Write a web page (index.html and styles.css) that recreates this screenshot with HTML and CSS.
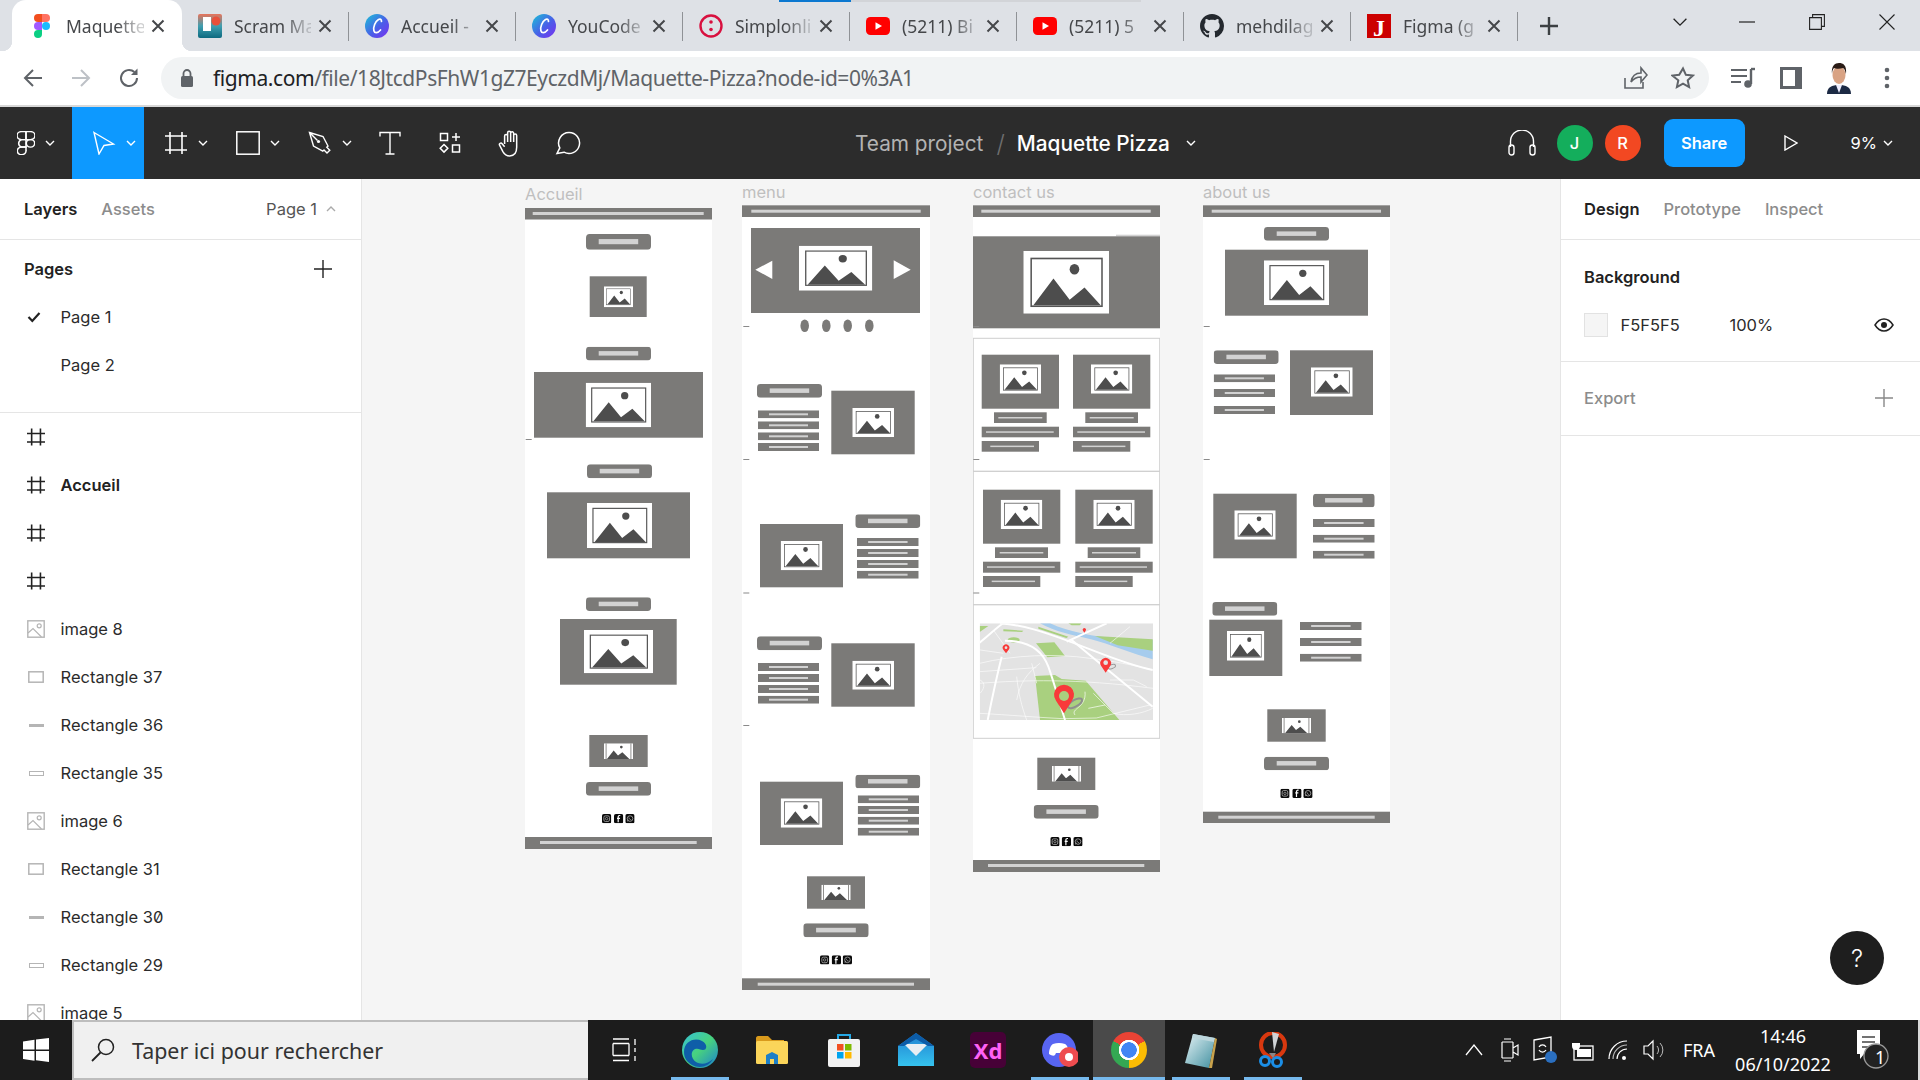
FILE: index.html
```html
<!DOCTYPE html>
<html lang="fr">
<head>
<meta charset="utf-8">
<title>Maquette Pizza – Figma</title>
<link rel="stylesheet" href="styles.css">
</head>
<body>
<svg class="sprite" aria-hidden="true">
  <defs>
    <linearGradient id="canvaG" x1="0" y1="0" x2="1" y2="1"><stop offset="0" stop-color="#19c3d6"/><stop offset=".55" stop-color="#4a5ee8"/><stop offset="1" stop-color="#7b2ff0"/></linearGradient>
    <linearGradient id="edgeG" x1="0" y1="0" x2="1" y2="1"><stop offset="0" stop-color="#35c1d8"/><stop offset=".5" stop-color="#48d27e"/><stop offset="1" stop-color="#1a7fd0"/></linearGradient>
    <linearGradient id="scrumG" x1="0" y1="0" x2="0" y2="1"><stop offset="0" stop-color="#e8735a"/><stop offset=".5" stop-color="#3f9fb0"/><stop offset="1" stop-color="#0d6a80"/></linearGradient>
    <linearGradient id="mailG" x1="0" y1="0" x2="0" y2="1"><stop offset="0" stop-color="#1f7fd0"/><stop offset="1" stop-color="#36c3ee"/></linearGradient>
    <linearGradient id="noteG" x1="0" y1="0" x2="1" y2="1"><stop offset="0" stop-color="#e6f3f6"/><stop offset="1" stop-color="#3f8f9f"/></linearGradient>
  </defs>
  <symbol id="chev" viewBox="0 0 10 6"><polyline points="1,1 5,5 9,1" fill="none" stroke="currentColor"/></symbol>
  <symbol id="frameic" viewBox="0 0 24 24"><path d="M6 1v22M18 1v22M1 5h22M1 19h22" fill="none" stroke="currentColor" stroke-width="1.6"/></symbol>
  <symbol id="hash" viewBox="0 0 17 16"><path d="M4.400 0v16M12.700 0v16M0 4.700h17M0 12.700h17" fill="none" stroke="currentColor" stroke-width="1.500"/></symbol>
  <symbol id="x" viewBox="0 0 14 14"><path d="M1.500 1.500l11 11M12.500 1.500l-11 11" fill="none" stroke="#45474a" stroke-width="2"/></symbol>
  <symbol id="imgic" viewBox="0 0 18 18"><rect x=".8" y=".8" width="16.400" height="16.400" fill="none" stroke="#b5b5b5" stroke-width="1.400"/><circle cx="12.200" cy="5.800" r="2" fill="none" stroke="#b5b5b5" stroke-width="1.200"/><path d="M1 13l5-4.500 8.500 8.500" fill="none" stroke="#b5b5b5" stroke-width="1.200"/></symbol>
  <symbol id="rectic" viewBox="-1 -3 18 18"><rect x=".8" y=".8" width="14.400" height="10.400" fill="none" stroke="#b5b5b5" stroke-width="1.500"/></symbol>
  <symbol id="pic" viewBox="0 0 196 134" preserveAspectRatio="none">
    <rect width="196" height="134" fill="#fff"/>
    <rect x="18" y="16" width="162" height="102" fill="#fff" stroke="#555" stroke-width="3.500"/>
    <circle cx="117" cy="39" r="11" fill="#4d4d4d"/>
    <path d="M23 116L69 59l37 45 34-26 37 38z" fill="#4d4d4d"/>
  </symbol>
  <symbol id="pic2" viewBox="0 0 87 46" preserveAspectRatio="none">
    <rect width="87" height="46" fill="#fff"/>
    <rect x="5" y="0" width="2.500" height="46" fill="#7b7a78"/><rect x="79.500" y="0" width="2.500" height="46" fill="#7b7a78"/>
    <circle cx="52" cy="11" r="4" fill="#4d4d4d"/>
    <path d="M9 46L29 21l13 15 13-10 21 20z" fill="#4d4d4d"/>
  </symbol>
  <symbol id="btn" viewBox="0 0 65 14" preserveAspectRatio="none">
    <rect width="65" height="14" rx="3.500" fill="#7b7a78"/><rect x="12.700" y="4.500" width="39.500" height="4.600" fill="#d2d2d2"/>
  </symbol>
  <symbol id="tl" viewBox="0 0 61 8" preserveAspectRatio="none">
    <rect width="61" height="8" fill="#7b7a78"/><rect x="11" y="3" width="39" height="2" fill="#d2d2d2"/>
  </symbol>
  <symbol id="soc1" viewBox="0 0 10 10"><rect width="10" height="10" rx="2" fill="#0a0a0a"/><rect x="2" y="2" width="6" height="6" rx="1.500" fill="none" stroke="#bbb" stroke-width=".8"/><circle cx="5" cy="5" r="1.300" fill="none" stroke="#bbb" stroke-width=".7"/></symbol>
  <symbol id="soc2" viewBox="0 0 10 10"><rect width="10" height="10" rx="2" fill="#0a0a0a"/><path d="M6.800 1.600H6c-1 0-1.500.6-1.500 1.600V9M3.200 4.600h3.300" fill="none" stroke="#fff" stroke-width="1.300"/></symbol>
  <symbol id="soc3" viewBox="0 0 10 10"><rect width="10" height="10" rx="2" fill="#0a0a0a"/><circle cx="5.100" cy="4.900" r="3" fill="none" stroke="#bbb" stroke-width=".8"/><path d="M2.400 8l.6-1.800M3.900 3.700c0 1.400 1 2.400 2.400 2.500" fill="none" stroke="#bbb" stroke-width=".8"/></symbol>
  <symbol id="yt" viewBox="0 0 24 24"><rect x="0" y="3" width="24" height="18" rx="4.500" fill="#f00"/><path d="M9.500 8.200v7.600L16 12z" fill="#fff"/></symbol>
  <symbol id="canva" viewBox="0 0 24 24"><circle cx="12" cy="12" r="12" fill="url(#canvaG)"/><path d="M16.500 7.500c.1-2.200-1.500-3-3-2-3.200 2-5.600 7.500-4.600 11.200.7 2.600 3.900 2.600 6.600-.7" fill="none" stroke="#fff" stroke-width="1.700" stroke-linecap="round"/></symbol>
</svg>

<header class="browser">
  <div class="tabstrip">
    <div class="tab tab-active">
      <svg class="favicon" viewBox="0 0 24 24"><path d="M12 0H8a4 4 0 0 0 0 8h4z" fill="#f24e1e"/><path d="M12 0h4a4 4 0 0 1 0 8h-4z" fill="#ff7262"/><path d="M12 8H8a4 4 0 0 0 0 8h4z" fill="#a259ff"/><circle cx="16" cy="12" r="4" fill="#1abcfe"/><path d="M8 16h4v4a4 4 0 1 1-4-4z" fill="#0acf83"/></svg>
      <span class="tab-title">Maquette</span><svg class="tab-x"><use href="#x"/></svg>
    </div>
    <div class="tab tab-nosep">
      <svg class="favicon" viewBox="0 0 24 24"><rect width="24" height="24" rx="2" fill="url(#scrumG)"/><rect x="5" y="3" width="8" height="14" fill="#fff"/><circle cx="18" cy="7" r="4.500" fill="#e8503a"/></svg>
      <span class="tab-title">Scram Ma</span><svg class="tab-x"><use href="#x"/></svg>
    </div>
    <div class="tab"><svg class="favicon"><use href="#canva"/></svg><span class="tab-title">Accueil -</span><svg class="tab-x"><use href="#x"/></svg></div>
    <div class="tab"><svg class="favicon"><use href="#canva"/></svg><span class="tab-title">YouCode</span><svg class="tab-x"><use href="#x"/></svg></div>
    <div class="tab">
      <svg class="favicon" viewBox="0 0 24 24"><circle cx="12" cy="12" r="10.500" fill="none" stroke="#d8103f" stroke-width="2.400"/><circle cx="12" cy="8" r="1.800" fill="#d8103f"/><circle cx="12" cy="15.500" r="1.800" fill="#d8103f"/></svg>
      <span class="tab-title">Simplonli</span><svg class="tab-x"><use href="#x"/></svg>
    </div>
    <div class="tab"><svg class="favicon"><use href="#yt"/></svg><span class="tab-title">(5211) Bi</span><svg class="tab-x"><use href="#x"/></svg></div>
    <div class="tab"><svg class="favicon"><use href="#yt"/></svg><span class="tab-title">(5211) 5</span><svg class="tab-x"><use href="#x"/></svg></div>
    <div class="tab">
      <svg class="favicon" viewBox="0 0 16 16"><path fill="#24292f" d="M8 0C3.58 0 0 3.58 0 8c0 3.54 2.29 6.53 5.47 7.59.4.07.55-.17.55-.38 0-.19-.01-.82-.01-1.49-2.01.37-2.53-.49-2.69-.94-.09-.23-.48-.94-.82-1.13-.28-.15-.68-.52-.01-.53.63-.01 1.08.58 1.23.82.72 1.21 1.87.87 2.33.66.07-.52.28-.87.51-1.07-1.78-.2-3.64-.89-3.64-3.95 0-.87.31-1.59.82-2.15-.08-.2-.36-1.02.08-2.12 0 0 .67-.21 2.2.82.64-.18 1.32-.27 2-.27.68 0 1.36.09 2 .27 1.53-1.04 2.2-.82 2.2-.82.44 1.1.16 1.92.08 2.12.51.56.82 1.27.82 2.15 0 3.07-1.87 3.75-3.65 3.95.29.25.54.73.54 1.48 0 1.07-.01 1.93-.01 2.2 0 .21.15.46.55.38A8.013 8.013 0 0016 8c0-4.42-3.58-8-8-8z"/></svg>
      <span class="tab-title">mehdilag</span><svg class="tab-x"><use href="#x"/></svg>
    </div>
    <div class="tab">
      <svg class="favicon" viewBox="0 0 24 24"><rect width="24" height="24" fill="#cc0000"/><text class="fav-j" x="12" y="22" text-anchor="middle">J</text></svg>
      <span class="tab-title">Figma (g</span><svg class="tab-x"><use href="#x"/></svg>
    </div>
    <svg class="newtab" viewBox="0 0 18 18"><path d="M9 0v18M0 9h18" fill="none" stroke="#3c4043" stroke-width="2.400"/></svg>
    <div class="winctrls">
      <svg class="tabsearch"><use href="#chev"/></svg>
      <span class="winbtn"><svg width="16" height="16" viewBox="0 0 16 16"><path d="M0 8h16" stroke="#222" stroke-width="1.200"/></svg></span>
      <span class="winbtn"><svg width="16" height="16" viewBox="0 0 16 16"><path d="M.6 3.600h11.800v11.800H.6zM3.600 3.400V.6h11.800v11.800h-2.800" fill="none" stroke="#222" stroke-width="1.100"/></svg></span>
      <span class="winbtn"><svg width="16" height="16" viewBox="0 0 16 16"><path d="M.5.5l15 15M15.500.5l-15 15" fill="none" stroke="#222" stroke-width="1.100"/></svg></span>
    </div>
  </div>
  <div class="addrbar">
    <span class="navbtn"><svg width="22" height="22" viewBox="0 0 22 22"><path d="M20 11H3M11 3l-8 8 8 8" fill="none" stroke="#5f6368" stroke-width="2"/></svg></span>
    <span class="navbtn"><svg width="22" height="22" viewBox="0 0 22 22"><path d="M2 11h17M11 3l8 8-8 8" fill="none" stroke="#bdc1c6" stroke-width="2"/></svg></span>
    <span class="navbtn"><svg width="24" height="24" viewBox="0 0 24 24"><path d="M20 12a8 8 0 1 1-2.600-5.900" fill="none" stroke="#5f6368" stroke-width="2"/><path d="M20.500 2.500v6.500h-6.500z" fill="#5f6368"/></svg></span>
    <div class="omnibox">
      <svg class="lock" viewBox="0 0 24 24"><rect x="6" y="10" width="12" height="11" rx="1.500" fill="#5f6368"/><path d="M8.500 10V7.500a3.500 3.500 0 0 1 7 0V10" fill="none" stroke="#5f6368" stroke-width="1.800"/></svg>
      <span class="url"><span class="url-host">figma.com</span>/file/18JtcdPsFhW1gZ7EyczdMj/Maquette-Pizza?node-id=0%3A1</span>
      <span class="navbtn"><svg width="26" height="26" viewBox="0 0 26 26"><path d="M3 13v10h18v-6M9 17c1-6 5-9 10-9V3l6 7-6 7v-5c-4 0-7 1-10 5z" fill="none" stroke="#5f6368" stroke-width="1.600"/></svg></span>
      <span class="navbtn"><svg width="24" height="24" viewBox="0 0 24 24"><path d="M12 2.500l2.900 6.300 6.900.8-5.100 4.700 1.400 6.800-6.100-3.400-6.100 3.400 1.400-6.800L1.300 9.600l6.900-.8z" fill="none" stroke="#5f6368" stroke-width="2"/></svg></span>
    </div>
    <span class="navbtn"><svg width="26" height="24" viewBox="0 0 26 24"><path d="M1 4h16M1 10h16M1 16h10" stroke="#5f6368" stroke-width="2.200"/><path d="M21 3v15" stroke="#5f6368" stroke-width="2.400"/><path d="M21 3h4" stroke="#5f6368" stroke-width="2.400"/><circle cx="18" cy="18" r="3.800" fill="#5f6368"/></svg></span>
    <span class="navbtn"><svg width="22" height="22" viewBox="0 0 22 22"><path d="M0 0h22v22H0zM15 3H3v16h12z" fill="#5f6368" fill-rule="evenodd"/></svg></span>
    <span class="navbtn"><svg width="26" height="32" viewBox="0 0 26 32"><path d="M1 32c0-7 5-9 12-9s12 2 12 9z" fill="#1c2a44"/><path d="M10 23h6l-3 8z" fill="#eef"/><ellipse cx="13" cy="13" rx="6.500" ry="9" fill="#d9a384"/><path d="M6 12c-1-8 3-11 7-11s8 2 7 11c-1-3-1-5-3-6-3 1-7 1-9 0-1 1-2 3-2 6z" fill="#2a1c16"/></svg></span>
    <span class="navbtn"><svg width="6" height="22" viewBox="0 0 6 22"><circle cx="3" cy="3" r="2.300" fill="#5f6368"/><circle cx="3" cy="11" r="2.300" fill="#5f6368"/><circle cx="3" cy="19" r="2.300" fill="#5f6368"/></svg></span>
  </div>
</header>

<div class="toolbar">
  <div class="tools">
    <span class="tool tool-logo">
      <svg class="ic-logo" viewBox="5 2 14 21" preserveAspectRatio="none"><g fill="none" stroke="#fff" stroke-width="1.200"><path d="M12 2.500H8.500a3.500 3.500 0 0 0 0 7H12z"/><path d="M12 2.500h3.500a3.500 3.500 0 0 1 0 7H12z"/><path d="M12 9.500H8.500a3.500 3.500 0 0 0 0 6.500H12z"/><circle cx="15.500" cy="12.800" r="3.300"/><path d="M8.500 16H12v3.200a3.400 3.400 0 1 1-3.500-3.200z"/></g></svg>
      <svg class="chev"><use href="#chev"/></svg>
    </span>
    <span class="tool tool-dd tool-on">
      <svg class="ic" viewBox="0 0 24 24"><path d="M2 1.500l19.500 11.500-9.500 1.500-5 8.500z" fill="none" stroke="#fff" stroke-width="1.400"/></svg>
      <svg class="chev"><use href="#chev"/></svg>
    </span>
    <span class="tool tool-dd"><svg class="ic"><use href="#frameic"/></svg><svg class="chev"><use href="#chev"/></svg></span>
    <span class="tool tool-dd">
      <svg class="ic" viewBox="0 0 24 24"><rect x=".8" y=".8" width="22.400" height="22.400" fill="none" stroke="#fff" stroke-width="1.500"/></svg>
      <svg class="chev"><use href="#chev"/></svg>
    </span>
    <span class="tool tool-dd">
      <svg class="ic" viewBox="0 0 24 24"><path d="M1.500 1.500l13.500 4 5 9.500-1.200 1.200 3 3-2.800 2.800-3-3-1.200 1.200-9.300-5.200zM1.500 1.500l8 8" fill="none" stroke="#fff" stroke-width="1.400"/><circle cx="10.500" cy="10.500" r="1.600" fill="#fff"/></svg>
      <svg class="chev"><use href="#chev"/></svg>
    </span>
    <span class="tool"><svg class="ic" viewBox="0 0 24 24"><path d="M2 5.500V1.500h20v4M12 1.500v21.500M7.500 23h9" fill="none" stroke="#fff" stroke-width="1.400"/></svg></span>
    <span class="tool"><svg class="ic" viewBox="0 0 24 24"><g fill="none" stroke="#fff" stroke-width="1.500"><rect x="2.500" y="2.500" width="7" height="7"/><path d="M18 2v8M14 6h8"/><path d="M6 13.500l3.800 3.800L6 21.100l-3.800-3.800z"/><rect x="14.500" y="14" width="7" height="7"/></g></svg></span>
    <span class="tool"><svg class="ic ic-hand" viewBox="0 0 24 26"><path d="M7 14V6.500a1.400 1.400 0 0 1 2.800 0V12M9.800 12V3.400a1.400 1.400 0 0 1 2.800 0V12M12.600 12V4a1.400 1.400 0 0 1 2.800 0v8M15.400 12V6a1.400 1.400 0 0 1 2.800 0v11c0 5-2.500 8-6.500 8-3 0-4.900-1.500-6.300-4L2.300 15c-.8-1.400 1.400-2.800 2.400-1.200L7 16.500" fill="none" stroke="#fff" stroke-width="1.400"/></svg></span>
    <span class="tool tool-comment"><svg class="ic ic-comment" viewBox="0 0 26 24"><path d="M14 1.500a10.500 10.500 0 1 1-5 19.700L2 22.500l2.800-5.600A10.500 10.500 0 0 1 14 1.500z" fill="none" stroke="#fff" stroke-width="1.500"/></svg></span>
  </div>
  <div class="filename">
    <span class="fn-team">Team project</span><span class="fn-sep">/</span><span class="fn-name">Maquette Pizza</span><svg class="chev fn-chev"><use href="#chev"/></svg>
  </div>
  <div class="tb-right">
    <svg class="ic-phones" viewBox="0 0 28 26"><path d="M2.500 17v-5.500a11.500 11.500 0 0 1 23 0V17" fill="none" stroke="#fff" stroke-width="1.400"/><rect x="1" y="15" width="5" height="10" rx="2.500" fill="none" stroke="#fff" stroke-width="1.400"/><rect x="22" y="15" width="5" height="10" rx="2.500" fill="none" stroke="#fff" stroke-width="1.400"/></svg>
    <span class="avatar av-j">J</span>
    <span class="avatar av-r">R</span>
    <span class="share">Share</span>
    <svg class="ic-play" viewBox="0 0 14 16"><path d="M1 1l12 7-12 7z" fill="none" stroke="#fff" stroke-width="1.400"/></svg>
    <span class="zoomlvl">9%</span><svg class="chev"><use href="#chev"/></svg>
  </div>
</div>

<main class="workspace">
  <aside class="left-panel">
    <div class="panel-tabs">
      <span class="ptab ptab-on">Layers</span><span class="ptab">Assets</span>
      <span class="page-picker">Page 1<svg class="chev chev-up"><use href="#chev"/></svg></span>
    </div>
    <section class="pages">
      <div class="pages-head"><span class="strong">Pages</span><svg class="plus" viewBox="0 0 18 18"><path d="M9 0v18M0 9h18" stroke="#222" stroke-width="1.400"/></svg></div>
      <div class="row"><svg class="row-svg check" viewBox="0 0 14 12"><path d="M1.500 6l3.800 4L12.500 2" fill="none" stroke="#222" stroke-width="2.200"/></svg><span>Page 1</span></div>
      <div class="row"><span class="row-ic"></span><span>Page 2</span></div>
    </section>
    <ul class="layers">
      <li class="row"><svg class="row-svg frame"><use href="#hash"/></svg></li>
      <li class="row strong"><svg class="row-svg frame"><use href="#hash"/></svg><span>Accueil</span></li>
      <li class="row"><svg class="row-svg frame"><use href="#hash"/></svg></li>
      <li class="row"><svg class="row-svg frame"><use href="#hash"/></svg></li>
      <li class="row"><svg class="row-svg"><use href="#imgic"/></svg><span>image 8</span></li>
      <li class="row"><svg class="row-svg"><use href="#rectic"/></svg><span>Rectangle 37</span></li>
      <li class="row"><span class="row-ic"><i class="dash-solid"></i></span><span>Rectangle 36</span></li>
      <li class="row"><span class="row-ic"><i class="dash-open"></i></span><span>Rectangle 35</span></li>
      <li class="row"><svg class="row-svg"><use href="#imgic"/></svg><span>image 6</span></li>
      <li class="row"><svg class="row-svg"><use href="#rectic"/></svg><span>Rectangle 31</span></li>
      <li class="row"><span class="row-ic"><i class="dash-solid"></i></span><span class="slashed">Rectangle 30</span></li>
      <li class="row"><span class="row-ic"><i class="dash-open"></i></span><span>Rectangle 29</span></li>
      <li class="row"><svg class="row-svg"><use href="#imgic"/></svg><span>image 5</span></li>
    </ul>
  </aside>

  <div class="canvas">
    <div class="board board-accueil">
      <div class="board-label">Accueil</div>
      <svg class="wire" width="187" height="641" viewBox="525 208 187 641">
        <rect class="w" x="525" y="208" width="187" height="641"/>
        <rect class="g" x="525" y="208" width="187" height="11.500"/><rect class="l" x="532.700" y="212" width="171" height="3"/>
        <use href="#btn" x="586" y="234" width="65" height="15.700"/>
        <rect class="g" x="589.700" y="276.300" width="57" height="40.700"/><use href="#pic" x="604" y="286.300" width="29" height="21"/>
        <use href="#btn" x="586" y="346.700" width="65" height="13.700"/>
        <rect class="g" x="534" y="372" width="169" height="65.700"/><use href="#pic" x="585.700" y="382.700" width="65.300" height="44.600"/>
        <rect class="d" x="525.700" y="439" width="6" height="1"/>
        <use href="#btn" x="587" y="464.300" width="65" height="14"/>
        <rect class="g" x="547" y="492.300" width="143" height="66"/><use href="#pic" x="587" y="503" width="65" height="45"/>
        <use href="#btn" x="586" y="597.300" width="65" height="13.700"/>
        <rect class="g" x="560" y="619" width="116.700" height="65.700"/><use href="#pic" x="584" y="630" width="69" height="43.300"/>
        <rect class="g" x="589.300" y="735" width="58.400" height="32"/><use href="#pic2" x="604" y="743.300" width="29" height="15.700"/>
        <use href="#btn" x="586" y="782" width="65" height="13.700"/>
        <use href="#soc1" x="602" y="814" width="9.300" height="9.300"/><use href="#soc2" x="614" y="814" width="9.300" height="9.300"/><use href="#soc3" x="625.300" y="814" width="9.300" height="9.300"/>
        <rect class="g" x="525" y="837" width="187" height="12"/><rect class="l" x="540" y="841" width="156.700" height="3"/>
      </svg>
    </div>

    <div class="board board-menu">
      <div class="board-label">menu</div>
      <svg class="wire" width="188" height="785" viewBox="742 205 188 785">
        <rect class="w" x="742" y="205" width="188" height="785"/>
        <rect class="g" x="742" y="205.300" width="188" height="11.700"/><rect class="l" x="751.300" y="209.700" width="169.400" height="3"/>
        <rect class="g" x="751" y="228" width="169" height="85"/><use href="#pic" x="799" y="245.700" width="73.300" height="45"/>
        <path class="wf" d="M755.300 269.700l17-9v18.300zM893.700 260.300v18.700l17-9.300z"/>
        <ellipse class="g" cx="804.700" cy="325.700" rx="4.300" ry="6.300"/><ellipse class="g" cx="826.300" cy="325.700" rx="4.300" ry="6.300"/><ellipse class="g" cx="847.700" cy="325.700" rx="4.300" ry="6.300"/><ellipse class="g" cx="869.300" cy="325.700" rx="4.300" ry="6.300"/>
        <rect class="d" x="743.300" y="326" width="6" height="1"/>
        <use href="#btn" x="757" y="384" width="65" height="13.700"/>
        <use href="#tl" x="758" y="410.300" width="61" height="8"/><use href="#tl" x="758" y="421.300" width="61" height="8"/><use href="#tl" x="758" y="432.300" width="61" height="8"/><use href="#tl" x="758" y="443" width="61" height="8"/>
        <rect class="g" x="831.300" y="390.700" width="83.400" height="63.600"/><use href="#pic" x="852.300" y="408" width="41.700" height="29"/>
        <rect class="d" x="743.300" y="459" width="6" height="1"/>
        <rect class="g" x="760" y="524" width="83" height="63.300"/><use href="#pic" x="780.700" y="541" width="41.600" height="29.300"/>
        <use href="#btn" x="855.300" y="514.300" width="65" height="13.700"/>
        <use href="#tl" x="857" y="538" width="61.700" height="8"/><use href="#tl" x="857" y="549" width="61.700" height="8"/><use href="#tl" x="857" y="560" width="61.700" height="8"/><use href="#tl" x="857" y="570.700" width="61.700" height="8"/>
        <rect class="d" x="743.300" y="592.500" width="6" height="1"/>
        <use href="#btn" x="757" y="636.300" width="65" height="14"/>
        <use href="#tl" x="758" y="663" width="61" height="8"/><use href="#tl" x="758" y="674" width="61" height="8"/><use href="#tl" x="758" y="685" width="61" height="8"/><use href="#tl" x="758" y="695.700" width="61" height="8"/>
        <rect class="g" x="831.300" y="643.300" width="83.400" height="63.400"/><use href="#pic" x="852.300" y="660.700" width="41.700" height="29"/>
        <rect class="d" x="743.300" y="725" width="6" height="1"/>
        <rect class="g" x="760" y="781.700" width="83" height="63.300"/><use href="#pic" x="780.700" y="798.300" width="41.600" height="29.400"/>
        <use href="#btn" x="855.300" y="774.700" width="65" height="13.600"/>
        <use href="#tl" x="857.700" y="795.300" width="61.300" height="8"/><use href="#tl" x="857.700" y="806" width="61.300" height="8"/><use href="#tl" x="857.700" y="816.700" width="61.300" height="8"/><use href="#tl" x="857.700" y="827.700" width="61.300" height="8"/>
        <rect class="g" x="807" y="876.300" width="58" height="32.400"/><use href="#pic2" x="821.300" y="884.700" width="29.400" height="15.300"/>
        <use href="#btn" x="803.300" y="923.300" width="65.400" height="14"/>
        <use href="#soc1" x="820" y="955.300" width="9.300" height="9.300"/><use href="#soc2" x="831.700" y="955.300" width="9.300" height="9.300"/><use href="#soc3" x="842.700" y="955.300" width="9.300" height="9.300"/>
        <rect class="g" x="742" y="978.300" width="188" height="11.700"/><rect class="l" x="757.700" y="982.700" width="156.300" height="3"/>
      </svg>
    </div>

    <div class="board board-contact">
      <div class="board-label">contact us</div>
      <svg class="wire" width="187" height="667" viewBox="973 205 187 667">
        <rect class="w" x="973" y="205" width="187" height="667"/>
        <rect class="g" x="973" y="205.300" width="187" height="11.700"/><rect class="l" x="981.300" y="209.700" width="169.400" height="3"/>
        <rect class="l" x="1116" y="234.700" width="44" height="1.500"/>
        <rect class="g" x="973" y="236.300" width="187" height="92"/><use href="#pic" x="1023.300" y="251" width="85.700" height="62.700"/>
        <rect class="d" x="973.300" y="326" width="6" height="1"/>
        <rect class="sec" x="973.300" y="338.300" width="186.400" height="133"/>
        <rect class="sec" x="973.300" y="471.300" width="186.400" height="133.400"/>
        <rect class="sec" x="973.300" y="604.700" width="186.400" height="133.600"/>

        <rect class="g" x="981.700" y="354.700" width="77.300" height="54"/><use href="#pic" x="999.700" y="364.300" width="41.300" height="29.400"/>
        <rect class="g" x="1073" y="354.700" width="77.300" height="54"/><use href="#pic" x="1091" y="364.300" width="41.300" height="29.400"/>
        <rect class="g" x="994" y="412.300" width="52.700" height="10.700"/><rect class="l" x="998.300" y="417" width="44" height="1.500"/>
        <rect class="g" x="1085.300" y="412.300" width="52.700" height="10.700"/><rect class="l" x="1089.700" y="417" width="44" height="1.500"/>
        <rect class="g" x="981.700" y="426.700" width="77.300" height="10.600"/><rect class="l" x="986" y="431.300" width="67.700" height="1.500"/>
        <rect class="g" x="1073" y="426.700" width="77.300" height="10.600"/><rect class="l" x="1077.300" y="431.300" width="67.700" height="1.500"/>
        <rect class="g" x="981.700" y="441" width="57.300" height="10.700"/><rect class="l" x="990.300" y="445.600" width="43.700" height="1.500"/>
        <rect class="g" x="1073" y="441" width="57.300" height="10.700"/><rect class="l" x="1081.700" y="445.600" width="43.700" height="1.500"/>
        <rect class="d" x="973.300" y="459" width="6" height="1"/>

        <rect class="g" x="983" y="489.700" width="77.300" height="54"/><use href="#pic" x="1000.700" y="499.700" width="41.600" height="29.300"/>
        <rect class="g" x="1075.300" y="489.700" width="77.400" height="54"/><use href="#pic" x="1093.300" y="499.700" width="41.400" height="29.300"/>
        <rect class="g" x="995" y="547.300" width="53" height="10.700"/><rect class="l" x="999.700" y="552" width="43.600" height="1.500"/>
        <rect class="g" x="1087.700" y="547.300" width="52.600" height="10.700"/><rect class="l" x="1092" y="552" width="44" height="1.500"/>
        <rect class="g" x="983" y="561.700" width="77.300" height="11"/><rect class="l" x="987" y="566.300" width="67.700" height="1.500"/>
        <rect class="g" x="1075.300" y="561.700" width="77.400" height="11"/><rect class="l" x="1079.700" y="566.300" width="67.300" height="1.500"/>
        <rect class="g" x="983" y="576" width="57.300" height="11"/><rect class="l" x="991.700" y="580.600" width="43.300" height="1.500"/>
        <rect class="g" x="1075.300" y="576" width="57.400" height="11"/><rect class="l" x="1084" y="580.600" width="43.300" height="1.500"/>
        <rect class="d" x="973.300" y="592.500" width="6" height="1"/>

        <svg x="979.700" y="623.300" width="173.300" height="96.700" viewBox="59 70 520 290" preserveAspectRatio="none">
          <rect x="59" y="70" width="520" height="290" fill="#e3e3e3"/>
          <path d="M240 70h30c30 14 60 22 95 30 50 12 130 18 213 20v58c-60-16-130-46-185-60-60-14-105-22-153-48z" fill="#a6cced"/>
          <path d="M405 108l173 10v34l-105-16z" fill="#a9d07f"/>
          <path d="M225 228l60-3 20 12 72 5 101 118H240z" fill="#a9d07f"/>
          <path d="M228 130l55-3 32 41-53 4z" fill="#a9d07f"/>
          <path d="M59 78h26l-26 18zM130 88l60 4-4 4-56-2zM235 80l90 30-6 4-84-28zM325 70h40l-6 6h-24z" fill="#a9d07f"/>
          <ellipse cx="161" cy="120" rx="18" ry="8" fill="#a9d07f"/>
          <g fill="none" stroke="#fff">
            <path d="M59 128c25-20 45-40 70-58M120 70c70 5 130 25 210 55 80 30 170 70 248 85M125 170c-15 60-30 130-42 190" stroke-width="6"/>
            <path d="M135 122c60 0 108 18 130 78 18 50 34 110 50 160M320 125L440 70M335 120l75 62L578 320" stroke-width="6"/>
            <path d="M59 190c100-25 230-30 330-15 70 8 130 20 189 35M59 250c130-10 290-15 520 15M59 340c90 5 170 12 250 16l100-2 165-40M170 230c5 50 15 90 30 130M100 90l50 70M240 190c-40 30-60 60-70 110M400 280l60 60c40 10 90 0 118-15M450 240h70l40 20M510 80l-60 50M60 150l70 10M60 240c20 10 10 30 0 40M59 215l170-12M215 190l15 60" stroke-width="1.800"/>
            <path d="M385 325l50-10M345 345c-15-20 35-20 30-70" stroke-width="2"/>
          </g>
          <ellipse cx="345" cy="310" rx="24" ry="10" fill="none" stroke="#8f8f8f" stroke-width="6" transform="rotate(-30 345 310)"/>
          <path d="M312 340l-24-38a30 30 0 1 1 48 0z" fill="#f83a3a"/><circle cx="312" cy="288" r="15" fill="#a9d07f"/>
          <ellipse cx="455" cy="200" rx="12" ry="6" fill="none" stroke="#9c9c9c" stroke-width="3" transform="rotate(-20 455 200)"/>
          <path d="M437 218l-13-19a16 16 0 1 1 26 0z" fill="#f83a3a"/><circle cx="437" cy="188" r="7" fill="#e3e3e3"/>
          <path d="M138 160l-8-11a10 10 0 1 1 16 0z" fill="#f83a3a"/><circle cx="138" cy="143" r="4" fill="#e3e3e3"/>
          <path d="M373 98l-4-6a5 5 0 1 1 8 0z" fill="#f83a3a"/>
        </svg>

        <rect class="g" x="1037.300" y="757.700" width="58" height="32.300"/><use href="#pic2" x="1052" y="766" width="29" height="15.700"/>
        <use href="#btn" x="1033.700" y="805" width="65" height="13.700"/>
        <use href="#soc1" x="1050.300" y="837" width="9.300" height="9.300"/><use href="#soc2" x="1061.700" y="837" width="9.300" height="9.300"/><use href="#soc3" x="1073.300" y="837" width="9.300" height="9.300"/>
        <rect class="g" x="973" y="860" width="187" height="12"/><rect class="l" x="988" y="864" width="156.300" height="3"/>
      </svg>
    </div>

    <div class="board board-about">
      <div class="board-label">about us</div>
      <svg class="wire" width="187" height="618" viewBox="1203 205 187 618">
        <rect class="w" x="1203" y="205" width="187" height="618"/>
        <rect class="g" x="1203" y="205.300" width="187" height="11.700"/><rect class="l" x="1211.700" y="209.700" width="169.300" height="3"/>
        <use href="#btn" x="1264" y="227" width="65" height="13.700"/>
        <rect class="g" x="1225" y="249.700" width="143" height="66"/><use href="#pic" x="1264" y="260.300" width="65" height="44.700"/>
        <rect class="d" x="1203.700" y="326" width="6" height="1"/>
        <use href="#btn" x="1213.700" y="350.300" width="65" height="13.700"/>
        <use href="#tl" x="1213.700" y="374.300" width="61.300" height="8"/><use href="#tl" x="1213.700" y="389" width="61.300" height="8"/><use href="#tl" x="1213.700" y="406" width="61.300" height="8"/>
        <rect class="g" x="1290" y="350.300" width="83" height="64.700"/><use href="#pic" x="1311" y="367.300" width="41.700" height="29.400"/>
        <rect class="d" x="1203.700" y="459" width="6" height="1"/>
        <rect class="g" x="1213.300" y="493.700" width="83.400" height="64.600"/><use href="#pic" x="1234.300" y="510.300" width="41.400" height="29.400"/>
        <use href="#btn" x="1313" y="493.700" width="61.700" height="13.600"/>
        <use href="#tl" x="1313" y="519" width="61.700" height="8"/><use href="#tl" x="1313" y="534.700" width="61.700" height="8"/><use href="#tl" x="1313" y="550.700" width="61.700" height="8"/>
        <use href="#btn" x="1212.300" y="602" width="65" height="13.700"/>
        <rect class="g" x="1209.300" y="619.700" width="73" height="56.300"/><use href="#pic" x="1227" y="631" width="37.300" height="29.700"/>
        <use href="#tl" x="1300" y="622" width="61.700" height="8"/><use href="#tl" x="1300" y="638" width="61.700" height="8"/><use href="#tl" x="1300" y="653.700" width="61.700" height="8"/>
        <rect class="g" x="1267.300" y="709.300" width="58.400" height="32.400"/><use href="#pic2" x="1282" y="718" width="29" height="15.300"/>
        <use href="#btn" x="1264" y="756.700" width="65" height="13.600"/>
        <use href="#soc1" x="1280.300" y="788.700" width="9.300" height="9.300"/><use href="#soc2" x="1292.300" y="788.700" width="9.300" height="9.300"/><use href="#soc3" x="1303.300" y="788.700" width="9.300" height="9.300"/>
        <rect class="g" x="1203" y="811.700" width="187" height="11.300"/><rect class="l" x="1218.300" y="815.700" width="156.400" height="3"/>
      </svg>
    </div>
  </div>

  <aside class="right-panel">
    <div class="panel-tabs panel-tabs-r">
      <span class="ptab ptab-on">Design</span><span class="ptab">Prototype</span><span class="ptab">Inspect</span>
    </div>
    <section class="bg-sec">
      <div class="strong bg-title">Background</div>
      <div class="bg-row">
        <span class="swatch"></span><span class="hex">F5F5F5</span><span>100%</span>
        <svg class="eye" viewBox="0 0 20 14"><path d="M1 7c2.500-4 5.500-6 9-6s6.500 2 9 6c-2.500 4-5.500 6-9 6s-6.500-2-9-6z" fill="none" stroke="#222" stroke-width="1.500"/><circle cx="10" cy="7" r="3" fill="#222"/></svg>
      </div>
    </section>
    <section class="export-sec">
      <span class="export">Export</span>
      <svg class="plus" viewBox="0 0 18 18"><path d="M9 0v18M0 9h18" stroke="#888" stroke-width="1.400"/></svg>
    </section>
  </aside>
  <span class="help">?</span>
</main>

<footer class="taskbar">
  <span class="start"><svg width="26" height="24" viewBox="0 0 26 24"><path d="M0 3.500l11.500-1.700v9.700H0zM13 1.600L26 0v11.500H13zM0 13h11.500v9.700L0 21zM13 13h13v11l-13-1.800z" fill="#fff"/></svg></span>
  <div class="searchbox">
    <svg width="26" height="24" viewBox="0 0 26 24"><circle cx="16" cy="9" r="7.500" fill="none" stroke="#222" stroke-width="1.500"/><path d="M10.500 14.500L2 23" stroke="#222" stroke-width="1.800"/></svg>
    <span>Taper ici pour rechercher</span>
  </div>
  <span class="taskview"><svg width="24" height="24" viewBox="0 0 24 24"><path d="M1 1h16M1 5.500h16M1 5.500v12M17 5.500v12M1 17.500h16M1 22.500h16M23 1v6M23 10v4M23 18v5" fill="none" stroke="#fff" stroke-width="1.300"/></svg></span>
  <span class="tb-slot run">
    <svg class="app" viewBox="0 0 36 36"><circle cx="18" cy="18" r="18" fill="url(#edgeG)"/><path d="M2 20C2 10 12 5 20 9c6 3 5 9 1 9-3 0-4-2-8-1-5 2-4 10 1 13 5 3 12 2 17-3-4 8-14 10-21 6C5 30 2 26 2 20z" fill="#0f5ea8"/></svg>
  </span>
  <span class="tb-slot">
    <svg class="app" viewBox="0 0 36 36"><path d="M2 6c0-1 1-2 2-2h10l4 4h12v6H2z" fill="#d99a1c"/><rect x="2" y="9" width="32" height="23" rx="1.500" fill="#fbd55a"/><path d="M12 32v-9l6-3 6 3v9h-4v-5h-4v5z" fill="#1d7fc7"/></svg>
  </span>
  <span class="tb-slot">
    <svg class="app" viewBox="0 0 36 36"><path d="M12 8V3h12v5" fill="none" stroke="#25a9e6" stroke-width="2"/><rect x="2" y="7" width="32" height="28" rx="2" fill="#f2f2f2"/><rect x="11" y="12" width="6.500" height="6.500" fill="#f25022"/><rect x="19" y="12" width="6.500" height="6.500" fill="#7fba00"/><rect x="11" y="20" width="6.500" height="6.500" fill="#00a4ef"/><rect x="19" y="20" width="6.500" height="6.500" fill="#ffb900"/></svg>
  </span>
  <span class="tb-slot">
    <svg class="app" viewBox="0 0 36 36"><path d="M18 1l18 13v20H0V14z" fill="url(#mailG)"/><path d="M6 12h24l-12 12z" fill="#e8eef3"/><path d="M18 1L0 14l6 0 12-7 12 7 6 0z" fill="#0c5ca8"/></svg>
  </span>
  <span class="tb-slot">
    <span class="app xd">Xd</span>
  </span>
  <span class="tb-slot run">
    <svg class="app" viewBox="0 0 36 36"><circle cx="17" cy="18" r="17" fill="#5865f2"/><path d="M7 22c0-5 2-9 4-10 4-1.500 8-1.500 12 0 2 1 4 5 4 10-3 2-5 2-6 1l-1-2h-6l-1 2c-1 1-3 1-6-1z" fill="#fff"/><circle cx="27" cy="25" r="10" fill="#ee4c4f"/><circle cx="27" cy="25" r="4" fill="#fff"/></svg>
  </span>
  <span class="tb-slot run active">
    <span class="app chromeic"></span>
  </span>
  <span class="tb-slot run">
    <svg class="app" viewBox="0 0 36 36"><path d="M10 2l22 4-6 30L2 31z" fill="url(#noteG)"/><path d="M10 2l22 4-1 4L9 6z" fill="#bcd6dc"/><path d="M26 36l6-30 2 1-5 29z" fill="#c8a24c"/></svg>
  </span>
  <span class="tb-slot run">
    <svg class="app" viewBox="0 0 36 36"><circle cx="18" cy="13" r="12" fill="none" stroke="#d8380f" stroke-width="4"/><path d="M17 0l2 20 5-18z" fill="#cfd3d6"/><path d="M14 21l7 0-3 5z" fill="#888"/><circle cx="10" cy="29" r="4.500" fill="none" stroke="#1b8ee6" stroke-width="3"/><circle cx="22" cy="30" r="4.500" fill="none" stroke="#1b8ee6" stroke-width="3"/></svg>
  </span>
  <div class="tray">
    <span class="tray-i"><svg width="18" height="12" viewBox="0 0 18 12"><path d="M1 11l8-10 8 10" fill="none" stroke="#fff" stroke-width="1.300"/></svg></span>
    <span class="tray-i"><svg width="18" height="24" viewBox="0 0 18 24"><path d="M3 1h7M3 23h7M1 4v16M12 4v16M1 4h11M1 20h11M12 10l5-3v10l-5-3" fill="none" stroke="#fff" stroke-width="1.200"/></svg></span>
    <span class="tray-i"><svg width="26" height="28" viewBox="0 0 26 28"><path d="M1 4l17-3v20L1 24z" fill="none" stroke="#fff" stroke-width="1.300"/><path d="M6 11a4 4 0 0 1 7 0M13 14a4 4 0 0 1-7 0" fill="none" stroke="#fff" stroke-width="1.200"/><circle cx="18" cy="21" r="6" fill="#2a6fc0"/></svg></span>
    <span class="tray-i"><svg width="26" height="24" viewBox="0 0 26 24"><path d="M5 1v4M9 1v4M3 5h8v3a4 4 0 0 1-8 0z" fill="#fff"/><rect x="5" y="8" width="19" height="14" fill="none" stroke="#fff" stroke-width="1.300"/><rect x="8" y="11" width="14" height="8" fill="#fff"/></svg></span>
    <span class="tray-i"><svg width="22" height="22" viewBox="0 0 22 22"><g fill="none" stroke="#fff" stroke-width="1.200"><path d="M2 20A18 18 0 0 1 20 2"/><path d="M6 20A14 14 0 0 1 20 6" opacity=".7"/><path d="M10 20A10 10 0 0 1 20 10"/></g><circle cx="17" cy="19" r="2" fill="#fff"/></svg></span>
    <span class="tray-i"><svg width="22" height="22" viewBox="0 0 22 22"><path d="M1 7h4l5-5v18l-5-5H1z" fill="none" stroke="#fff" stroke-width="1.200"/><path d="M14 7a6 6 0 0 1 0 8M17 4a10 10 0 0 1 0 14" fill="none" stroke="#bbb" stroke-width="1"/></svg></span>
    <span class="lang">FRA</span>
    <span class="clock"><span>14:46</span><span>06/10/2022</span></span>
    <span class="notif"><svg width="36" height="44" viewBox="0 0 36 44"><path d="M3 2h23v24H10l-4 5v-5H3z" fill="#fff"/><path d="M8 9h13M8 14h13M8 19h9" stroke="#444" stroke-width="1.300"/><circle cx="22" cy="28" r="12" fill="#222" stroke="#999" stroke-width="1.300"/></svg><b class="notif-n">1</b></span>
  </div>
</footer>
</body>
</html>
```
FILE: styles.css
```css
* { box-sizing: border-box; }
html, body { margin: 0; padding: 0; }
body {
  width: 1920px;
  height: 1080px;
  overflow: hidden;
  display: flex;
  flex-direction: column;
  font-family: Inter, "Noto Sans", sans-serif;
  background: #f5f5f5;
}
.sprite { position: absolute; width: 0; height: 0; }

/* browser chrome */
.browser { flex: none; font-family: "Noto Sans", "Open Sans", sans-serif; }
.tabstrip {
  height: 51px;
  background: #dee1e6;
  display: flex;
  align-items: stretch;
  padding-left: 12px;
  position: relative;
}
.tabstrip::before {
  content: "";
  position: absolute;
  left: 779px; top: 0;
  width: 362px; height: 2px;
  background: linear-gradient(90deg, #0b78d0 0 72px, #d2d4d8 72px);
}
.tab {
  width: 167px;
  display: flex;
  align-items: center;
  padding: 0 14px 0 16px;
  position: relative;
  font-size: 17.500px;
  color: #45474a;
}
.tab:not(.tab-active):not(.tab-nosep)::after,
.tab-nosep::before {
  content: "";
  position: absolute;
  right: 0; top: 12px;
  width: 1.500px; height: 29px;
  background: #8f9296;
}
.tab-active {
  width: 170px;
  padding-left: 18px;
  background: #fff;
  border-radius: 14px 14px 0 0;
}
.tab-active::before, .tab-active::after {
  content: "";
  position: absolute;
  bottom: 0;
  width: 10px; height: 10px;
}
.tab-active::before { left: -10px; background: radial-gradient(circle at 0 0, transparent 10px, #fff 10.500px); }
.tab-active::after { right: -10px; background: radial-gradient(circle at 100% 0, transparent 10px, #fff 10.500px); }
.favicon { width: 24px; height: 24px; flex: none; margin-right: 12px; }
.tab-title {
  flex: 1;
  min-width: 0;
  white-space: nowrap;
  margin-right: 4px;
  -webkit-mask-image: linear-gradient(90deg, #000 65%, rgba(0,0,0,.25) 95%);
  mask-image: linear-gradient(90deg, #000 65%, rgba(0,0,0,.25) 95%);
}
.tab-x { width: 14px; height: 14px; flex: none; margin: 0 3px; }
.fav-j { font: 700 24px "Liberation Serif", serif; fill: #fff; }
.newtab { width: 18px; height: 18px; margin: 17px 0 0 22px; flex: none; }
.winctrls { margin-left: auto; display: flex; align-items: flex-start; }
.tabsearch { width: 16px; height: 10px; margin: 17px 22px 0 0; color: #222; stroke-width: .8; }
.winbtn { width: 70px; height: 44px; padding-left: 3px; display: flex; align-items: center; justify-content: center; }

.addrbar {
  height: 56px;
  background: #fff;
  border-bottom: 2px solid #d8d8d8;
  display: flex;
  align-items: center;
  padding: 0 9px;
}
.navbtn { width: 48px; height: 42px; display: flex; align-items: center; justify-content: center; flex: none; }
.omnibox {
  flex: 1;
  height: 42px;
  margin: 0 10px 0 8px;
  padding: 0 2px 0 14px;
  border-radius: 21px;
  background: #f1f3f4;
  display: flex;
  align-items: center;
}
.lock { width: 24px; height: 24px; margin-right: 14px; flex: none; }
.url { flex: 1; font-size: 21px; color: #5f6368; white-space: nowrap; letter-spacing: -.43px; }
.url-host { color: #202124; }

/* figma toolbar */
.toolbar {
  height: 72px;
  flex: none;
  background: #2c2c2c;
  color: #fff;
  display: flex;
  align-items: center;
  position: relative;
}
.tools { display: flex; height: 100%; }
.tool { width: 60px; height: 100%; display: flex; align-items: center; justify-content: center; }
.tool-logo { width: 72px; gap: 10px; }
.tool-dd { width: 72px; gap: 10px; padding-left: 12px; }
.tool-on { background: #0d99ff; }
.tool-comment { padding-right: 4px; }
.ic { width: 24px; height: 24px; color: #fff; }
.ic-hand { height: 28px; width: 26px; }
.ic-comment { width: 26px; }
.ic-logo { width: 18px; height: 24px; }
.chev { width: 10px; height: 6px; color: #fff; flex: none; stroke-width: 1.400; }
.filename {
  position: absolute;
  left: 855px; top: 0;
  height: 100%;
  display: flex;
  align-items: center;
  font-size: 20.800px;
}
.fn-team { color: #b3b3b3; }
.fn-sep { color: #6f6f6f; margin: 0 12px 0 13px; font-size: 24px; font-weight: 300; }
.fn-name { color: #fff; font-weight: 500; }
.fn-chev { margin-left: 16px; }
.tb-right { margin-left: auto; display: flex; align-items: center; height: 100%; padding-right: 27px; }
.ic-phones { width: 28px; height: 26px; margin-right: 21px; }
.avatar {
  width: 36px; height: 36px;
  border-radius: 50%;
  display: flex; align-items: center; justify-content: center;
  font-size: 16.500px; font-weight: 500;
  margin-right: 12px;
}
.av-j { background: #14ae5c; }
.av-r { background: #f24822; margin-right: 23px; }
.share {
  width: 81px; height: 48px;
  border-radius: 9px;
  background: #0d99ff;
  display: flex; align-items: center; justify-content: center;
  font-size: 16.500px; font-weight: 600;
  margin-right: 39px;
}
.ic-play { width: 14px; height: 16px; margin-right: 53px; }
.zoomlvl { font-size: 16.500px; margin-right: 6px; }

/* workspace */
.workspace { flex: 1; min-height: 0; display: flex; position: relative; overflow: hidden; }
.left-panel {
  width: 362px;
  flex: none;
  background: #fff;
  border-right: 1px solid #e5e5e5;
  font-size: 16.500px;
  color: #2b2b2b;
  overflow: hidden;
}
.right-panel {
  width: 360px;
  flex: none;
  background: #fff;
  border-left: 1px solid #e5e5e5;
  font-size: 16.500px;
  color: #2b2b2b;
}
.panel-tabs {
  height: 61px;
  border-bottom: 1px solid #e5e5e5;
  display: flex;
  align-items: center;
  gap: 24px;
  padding: 0 25px 0 24px;
  color: #8c8c8c;
  font-weight: 500;
}
.panel-tabs-r { padding-left: 23px; }
.ptab-on { color: #222; font-weight: 600; }
.page-picker { margin-left: auto; display: flex; align-items: center; gap: 9px; color: #555; font-weight: 400; }
.chev-up { transform: rotate(180deg); color: #aaa; }
.strong { font-weight: 600; color: #222; }
.pages { border-bottom: 1px solid #e5e5e5; padding-bottom: 23px; }
.pages-head {
  height: 53px;
  padding: 5px 29px 0 24px;
  display: flex;
  align-items: center;
  justify-content: space-between;
}
.plus { width: 18px; height: 18px; }
.row { height: 48px; display: flex; align-items: center; padding-left: 24px; white-space: nowrap; }
.row-ic { width: 24px; height: 18px; margin-right: 12.500px; flex: none; display: flex; align-items: center; padding-left: 3px; }
.row-svg { width: 18px; height: 18px; margin: 0 15.500px 0 3px; flex: none; }
.check { width: 14px; height: 12px; margin-right: 19.500px; }
.frame { color: #222; }
.dash-solid, .dash-open { display: block; width: 15px; margin-left: 2px; }
.dash-solid { height: 3px; background: #b5b5b5; }
.dash-open { height: 5px; border: 1.500px solid #b5b5b5; }
.layers { list-style: none; margin: 0; padding: 0; }
.slashed { font-variant-numeric: slashed-zero; }

/* canvas and frames placed on it */
.canvas { flex: 1; position: relative; background: #f5f5f5; min-width: 0; }
.board { position: absolute; }
.board-accueil { left: 163px; top: 7px; }
.board-menu { left: 380px; top: 4px; }
.board-contact { left: 611px; top: 4px; }
.board-about { left: 841px; top: 4px; }
.board-label { height: 22px; line-height: 18px; font-size: 16.500px; color: #bfbfbf; white-space: nowrap; }
.board-accueil .board-label { line-height: 16px; }
.wire { display: block; }
.w, .wf { fill: #fff; }
.g { fill: #7b7a78; }
.l { fill: #d2d2d2; }
.d { fill: #8a8a8a; }
.sec { fill: none; stroke: #cfcfcf; stroke-width: 1; }

/* right panel */
.bg-sec { height: 122px; border-bottom: 1px solid #e5e5e5; padding: 25px 0 0 23px; }
.bg-title { line-height: 24px; }
.bg-row { display: flex; align-items: center; margin-top: 24px; height: 24px; }
.swatch { width: 24px; height: 24px; background: #f5f5f5; border: 1px solid #e2e2e2; margin-right: 12.500px; }
.hex { width: 109px; }
.eye { width: 20px; height: 14px; margin-left: auto; margin-right: 26px; }
.export-sec {
  height: 74px;
  border-bottom: 1px solid #e5e5e5;
  display: flex; align-items: center; justify-content: space-between;
  padding: 0 27px 2px 23px;
}
.export { color: #8c8c8c; font-weight: 500; }
.help {
  position: absolute;
  right: 36px; bottom: 35px;
  width: 54px; height: 54px;
  border-radius: 50%;
  background: #1e1e1e;
  color: #fff;
  display: flex; align-items: center; justify-content: center;
  font-size: 24px;
  font-weight: 300;
}

/* windows taskbar */
.taskbar {
  height: 60px;
  flex: none;
  background: #1c1c1c;
  display: flex;
  align-items: stretch;
  color: #fff;
  font-family: "Noto Sans", "Open Sans", sans-serif;
}
.start { width: 72px; display: flex; align-items: center; justify-content: center; flex: none; }
.searchbox {
  width: 516px;
  flex: none;
  background: #f0f0f0;
  border: 2px solid #bdbdbd;
  border-right-width: 0;
  display: flex;
  align-items: center;
  gap: 16px;
  padding-left: 16px;
  color: #333;
  font-size: 21.400px;
}
.taskview { width: 72px; display: flex; align-items: center; justify-content: center; margin-right: 4px; flex: none; }
.tb-slot { width: 72px; flex: none; display: flex; align-items: center; justify-content: center; position: relative; }
.tb-slot.run::after {
  content: "";
  position: absolute;
  left: 7px; right: 7px; bottom: 0;
  height: 3px;
  background: #76b9ed;
}
.tb-slot.active { background: #4a4a4a; margin-left: -3px; }
.tb-slot.active::after { left: 0; right: 0; }
.app { width: 36px; height: 36px; display: block; }
.xd {
  background: #470137;
  color: #ff61f6;
  border-radius: 5px;
  font: 700 22px/36px "Noto Sans", sans-serif;
  text-align: center;
}
.chromeic {
  border-radius: 50%;
  background:
    radial-gradient(circle at 50% 50%, #4285f4 0 7.500px, #fff 8px 10px, transparent 10.500px),
    conic-gradient(from 300deg, #ea4335 0 120deg, #fbbc04 120deg 240deg, #34a853 240deg 360deg);
}
.tray { margin-left: auto; display: flex; align-items: center; padding-right: 18px; border-right: 2px solid #d8d8d8; }
.tray-i { width: 36px; display: flex; align-items: center; justify-content: center; }
.lang { width: 54px; text-align: center; font-size: 18px; }
.clock { width: 114px; display: flex; flex-direction: column; align-items: center; gap: 5px; font-size: 18px; line-height: 23px; }
.notif { width: 60px; padding-left: 4px; display: flex; justify-content: center; position: relative; }
.notif-n { position: absolute; left: 35px; top: 17px; font-size: 18px; font-weight: 400; }
```
